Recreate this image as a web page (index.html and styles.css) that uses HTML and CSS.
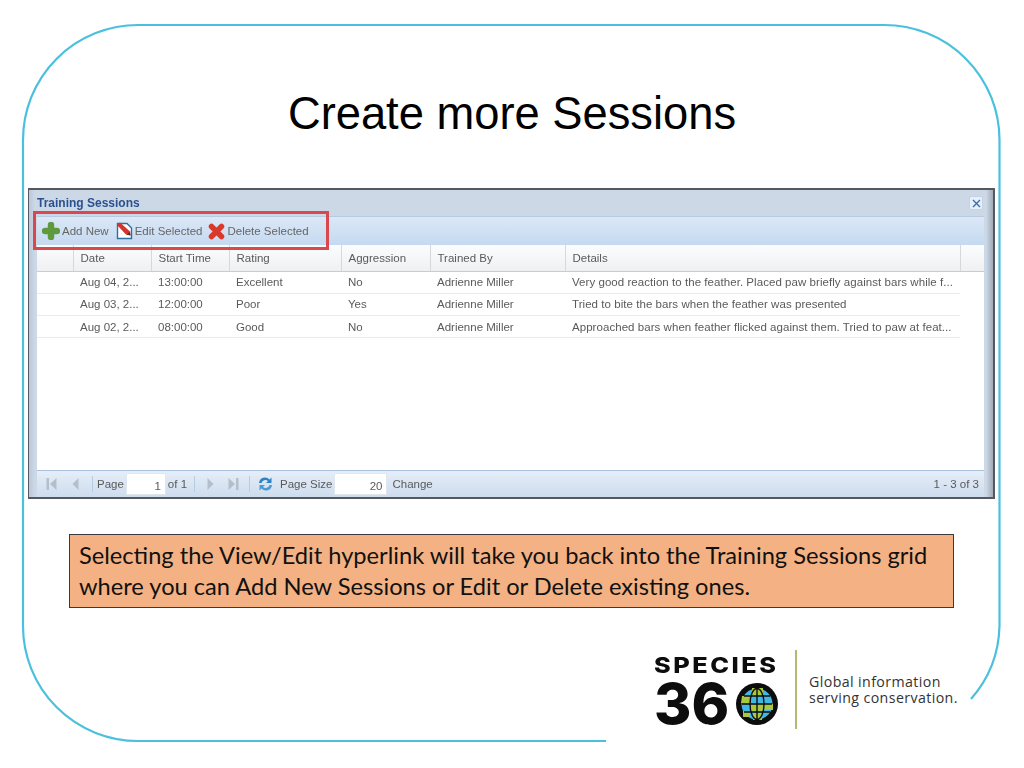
FILE: index.html
```html
<!DOCTYPE html>
<html lang="en">
<head>
    <meta charset="UTF-8">
    <meta name="viewport" content="width=device-width, initial-scale=1.0">
    <title>Create more Sessions</title>
    <link rel="stylesheet" href="styles.css">
</head>
<body>
    <svg class="frame" width="1024" height="768" viewBox="0 0 1024 768">
        <path d="M606 741H138A115 115 0 0 1 23 626V140A115 115 0 0 1 138 25H884.500A115 115 0 0 1 999.500 140V626A115 115 0 0 1 971 699" fill="none" stroke="#4bc0de" stroke-width="2.200"/>
    </svg>

    <div class="slide">
        <h1 class="slide-title">Create more Sessions</h1>

        <div class="window">
            <div class="window-title">
                <span>Training Sessions</span>
                <span class="close-button">
                    <svg width="9" height="9" viewBox="0 0 9 9"><path d="M1 1L8 8M8 1L1 8" stroke="#3c6ea8" stroke-width="1.400" fill="none"/></svg>
                </span>
            </div>

            <div class="window-body">
                <div class="toolbar">
                    <div class="tool tool-add">
                        <svg width="18" height="18" viewBox="0 0 18 18"><path d="M9 3V15M3 9H15" stroke="#5f9a3e" stroke-width="6.500" stroke-linecap="round" fill="none"/></svg>
                        <span>Add New</span>
                    </div>
                    <div class="tool tool-edit">
                        <svg width="17" height="18" viewBox="0 0 17 18">
                            <path d="M1.500 1.500H11L15.500 6V16.500H1.500Z" fill="#fff" stroke="#2f6f9f" stroke-width="1.400"/>
                            <path d="M1 3L4 0.500L14 9.500L14.500 13.500L10 12.500Z" fill="#d8322e"/>
                            <path d="M10.500 12.500L14.500 13.500L14 10Z" fill="#3a3a3a"/>
                        </svg>
                        <span>Edit Selected</span>
                    </div>
                    <div class="tool tool-delete">
                        <svg width="17" height="17" viewBox="0 0 17 17"><path d="M3.500 3.500L13.500 13.500M13.500 3.500L3.500 13.500" stroke="#d8392b" stroke-width="5.500" stroke-linecap="round" fill="none"/></svg>
                        <span>Delete Selected</span>
                    </div>
                </div>

                <div class="grid-area">
                    <table class="data-table">
                        <colgroup>
                            <col class="col-select"><col class="col-date"><col class="col-time"><col class="col-rating">
                            <col class="col-aggression"><col class="col-trainer"><col class="col-details"><col class="col-end">
                        </colgroup>
                        <thead>
                            <tr>
                                <th></th><th>Date</th><th>Start Time</th><th>Rating</th><th>Aggression</th><th>Trained By</th><th>Details</th><th></th>
                            </tr>
                        </thead>
                        <tbody>
                            <tr>
                                <td></td><td>Aug 04, 2...</td><td>13:00:00</td><td>Excellent</td><td>No</td><td>Adrienne Miller</td>
                                <td class="cell-details">Very good reaction to the feather. Placed paw briefly against bars while f...</td><td class="cell-end"></td>
                            </tr>
                            <tr>
                                <td></td><td>Aug 03, 2...</td><td>12:00:00</td><td>Poor</td><td>Yes</td><td>Adrienne Miller</td>
                                <td class="cell-details">Tried to bite the bars when the feather was presented</td><td class="cell-end"></td>
                            </tr>
                            <tr>
                                <td></td><td>Aug 02, 2...</td><td>08:00:00</td><td>Good</td><td>No</td><td>Adrienne Miller</td>
                                <td class="cell-details">Approached bars when feather flicked against them. Tried to paw at feat...</td><td class="cell-end"></td>
                            </tr>
                        </tbody>
                    </table>
                </div>

                <div class="pager">
                    <svg class="pager-icon first" width="11" height="14" viewBox="0 0 11 14"><path d="M0.500 1H3V13H0.500ZM10.500 1V13L4 7Z" fill="#b4bfca"/></svg>
                    <svg class="pager-icon prev" width="7" height="14" viewBox="0 0 7 14"><path d="M6.500 1V13L0.500 7Z" fill="#b4bfca"/></svg>
                    <span class="pager-sep sep-first"></span>
                    <span class="pager-label label-page">Page</span>
                    <span class="pager-input input-page">1</span>
                    <span class="pager-label label-of">of 1</span>
                    <span class="pager-sep sep-second"></span>
                    <svg class="pager-icon next" width="7" height="14" viewBox="0 0 7 14"><path d="M0.500 1V13L6.500 7Z" fill="#b4bfca"/></svg>
                    <svg class="pager-icon last" width="11" height="14" viewBox="0 0 11 14"><path d="M0.500 1V13L7 7ZM8 1H10.500V13H8Z" fill="#b4bfca"/></svg>
                    <span class="pager-sep sep-third"></span>
                    <svg class="pager-icon refresh" width="17" height="18" viewBox="0 0 17 18">
                        <path d="M2 8A6 6 0 0 1 12.500 4.500L14.500 2.500V8H9L11 6A4 4 0 0 0 4.500 8Z" fill="#2f82c8"/>
                        <path d="M15 10A6 6 0 0 1 4.500 13.500L2.500 15.500V10H8L6 12A4 4 0 0 0 12.500 10Z" fill="#4a9ad6"/>
                    </svg>
                    <span class="pager-label label-size">Page Size</span>
                    <span class="pager-input input-size">20</span>
                    <span class="pager-label label-change">Change</span>
                    <span class="pager-label pager-count">1 - 3 of 3</span>
                </div>
            </div>
        </div>

        <div class="callout">
            Selecting the View/Edit hyperlink will take you back into the Training Sessions grid<br>
            where you can Add New Sessions or Edit or Delete existing ones.
        </div>

        <div class="footer">
            <div class="logo">
                <div class="logo-name">SPECIES</div>
                <div class="logo-number">
                    <span>36</span>
                    <svg width="42" height="42" viewBox="0 0 42 42">
                        <circle cx="21" cy="21" r="21" fill="#0d0d0d"/>
                        <circle cx="21" cy="21" r="15.500" fill="#3fb8e6"/>
                        <path d="M6 13H15V20H5ZM16 5H27V13H16ZM15 21H27V29H15ZM7 28H14V34H7ZM28 21H37V27H28ZM17 30H26V37H17Z" fill="#a9c83e"/>
                        <g fill="none" stroke="#0d0d0d" stroke-width="1.400">
                            <ellipse cx="21" cy="21" rx="7" ry="15.500"/>
                            <path d="M21 6V36M8 13H34M6 21H36M8 29H34"/>
                        </g>
                    </svg>
                </div>
            </div>
            <div class="logo-rule"></div>
            <div class="tagline">Global information<br>serving conservation.</div>
        </div>
    </div>
</body>
</html>
```

FILE: styles.css
```css
* {
    margin: 0;
    padding: 0;
    box-sizing: border-box;
}

html, body {
    width: 1024px;
    height: 768px;
    overflow: hidden;
    background-color: #ffffff;
}

body {
    position: relative;
    font-family: 'Liberation Sans', Arial, sans-serif;
    color: #000;
}

.frame {
    position: absolute;
    left: 0;
    top: 0;
}

.slide {
    position: relative;
    display: flex;
    flex-direction: column;
    height: 768px;
}

.slide-title {
    height: 188px;
    padding-top: 88px;
    text-align: center;
    font-size: 45.300px;
    font-weight: 400;
    line-height: 52px;
}

/* grid window */
.window {
    display: flex;
    flex-direction: column;
    width: 967px;
    height: 311px;
    margin-left: 28px;
    background: linear-gradient(90deg, #b9c8da 0, #ccd8e6 6px, #ccd8e6 957px, #9aa5b1 965px);
    border: 1px solid #55595e;
    border-top-width: 2px;
    border-right-width: 2px;
    border-bottom-width: 2px;
    color: #5a5a5a;
    font-size: 11.500px;
    filter: blur(0.3px);
}

.window-title {
    display: flex;
    align-items: center;
    justify-content: space-between;
    height: 26px;
    padding: 0 10px 0 8px;
    font-size: 12px;
    font-weight: 700;
    color: #2b5191;
}

.close-button {
    display: flex;
    align-items: center;
    justify-content: center;
    width: 14px;
    height: 14px;
    background-color: #e6effa;
    border: 1px solid #c3d4e8;
    border-radius: 2px;
}

.window-body {
    display: flex;
    flex-direction: column;
    flex: 1;
    margin: 0 9px 0 8px;
    min-height: 0;
}

.toolbar {
    display: flex;
    align-items: center;
    height: 29px;
    padding-left: 5px;
    background: linear-gradient(#dbe8f7, #c5d9f0);
    border-top: 1px solid #b6cbe2;
    position: relative;
}

/* red highlight drawn on the slide over the toolbar */
.toolbar::after {
    content: "";
    position: absolute;
    box-sizing: border-box;
    left: -4px;
    top: -6px;
    width: 296px;
    height: 39px;
    border: 3px solid #d9484f;
}

.tool {
    display: flex;
    align-items: center;
    gap: 2px;
    color: #666;
}

.tool-edit {
    margin-left: 7px;
}

.tool-delete {
    margin-left: 6px;
}

.grid-area {
    flex: 1;
    background-color: #fff;
    min-height: 0;
}

.data-table {
    width: 947px;
    table-layout: fixed;
    border-collapse: collapse;
    font-size: 11.500px;
}

.col-select { width: 36px; }
.col-date { width: 78px; }
.col-time { width: 78px; }
.col-rating { width: 112px; }
.col-aggression { width: 89px; }
.col-trainer { width: 135px; }
.col-details { width: 395px; }
.col-end { width: 24px; }

.data-table th {
    height: 26px;
    padding: 0 0 0 7px;
    text-align: left;
    font-weight: 400;
    background: linear-gradient(#fbfcfd, #eef0f2);
    border-right: 1px solid #d5d9de;
    border-bottom: 1px solid #c9cdd2;
}

.data-table th:last-child {
    border-right: none;
}

.data-table td {
    height: 22.300px;
    padding: 0 0 0 7px;
    white-space: nowrap;
    overflow: hidden;
    border-bottom: 1px solid #e9ebee;
}

.data-table td.cell-details {
    letter-spacing: 0.050px;
}

.data-table td.cell-end {
    border-bottom: none;
}

.pager {
    display: flex;
    align-items: center;
    height: 27px;
    background: linear-gradient(#e6eef8, #cddcee);
    border-top: 1px solid #a9c3de;
}

.pager-sep {
    width: 1px;
    height: 16px;
    background-color: #b9cbdf;
}

.pager-input {
    height: 22px;
    line-height: 24px;
    padding-right: 4px;
    text-align: right;
    background-color: #fff;
    border: 1px solid #dfe6ee;
}

.first { margin-left: 9px; }
.prev { margin-left: 15px; }
.sep-first { margin-left: 13px; }
.label-page { margin-left: 4px; }
.input-page { width: 40px; margin-left: 2px; }
.label-of { margin-left: 2px; }
.sep-second { margin-left: 7px; }
.next { margin-left: 12px; }
.last { margin-left: 14px; }
.sep-third { margin-left: 10px; }
.refresh { margin-left: 7px; }
.label-size { margin-left: 6px; }
.input-size { width: 53px; margin-left: 2px; }
.label-change { margin-left: 5px; }

.pager-count {
    margin-left: auto;
    padding-right: 5px;
}

/* note under the grid */
.callout {
    width: 885px;
    height: 74px;
    margin: 35px 0 0 69px;
    padding: 5px 0 0 9px;
    background-color: #f4b183;
    border: 1px solid #3a3a3a;
    font-family: Lato, 'Liberation Sans', sans-serif;
    font-size: 23.650px;
    line-height: 31px;
    color: #111;
}

.footer {
    display: flex;
    margin: 42px 0 0 654px;
}

.logo {
    display: flex;
    flex-direction: column;
    width: 124px;
    padding-top: 4px;
    color: #0d0d0d;
    font-family: Inter, sans-serif;
    font-weight: 800;
}

.logo-name {
    font-size: 22px;
    line-height: 22px;
    letter-spacing: 2.200px;
    transform: scaleX(1.150);
    transform-origin: left center;
}

.logo-number {
    display: flex;
    align-items: center;
    justify-content: space-between;
    margin-top: 4px;
    font-size: 57px;
    line-height: 48px;
}

.logo-rule {
    width: 2px;
    height: 79px;
    margin-left: 17px;
    background-color: #b5ba72;
}

.tagline {
    margin: 24px 0 0 12px;
    font-family: 'Open Sans', sans-serif;
    font-size: 14.200px;
    letter-spacing: 0.400px;
    line-height: 15.500px;
    color: #333;
}
```
